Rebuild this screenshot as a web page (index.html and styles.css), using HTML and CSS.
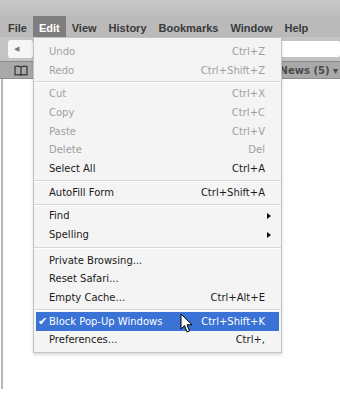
FILE: index.html
```html
<!DOCTYPE html>
<html lang="en">
<head>
    <meta charset="UTF-8">
    <meta name="viewport" content="width=device-width, initial-scale=1.0">
    <title>Safari - Edit menu</title>
    <link rel="stylesheet" href="styles.css">
</head>
<body>
    <div class="window">
        <div class="titlebar"></div>
        <div class="menubar">
            <span class="menu-title">File</span>
            <span class="menu-title active">Edit</span>
            <span class="menu-title">View</span>
            <span class="menu-title">History</span>
            <span class="menu-title">Bookmarks</span>
            <span class="menu-title">Window</span>
            <span class="menu-title">Help</span>
        </div>
        <div class="toolbar">
            <div class="back-btn">&#9664;</div>
            <div class="address"></div>
        </div>
        <div class="bookmarks">
            <svg class="book" width="14" height="11" viewBox="0 0 14 11">
                <path d="M1 1.5 Q4 0.5 7 2 Q10 0.5 13 1.5 L13 10 Q10 9 7 10.2 Q4 9 1 10 Z M7 2 L7 10.2" fill="none" stroke="#333" stroke-width="1.2"/>
            </svg>
            <span class="news">News (5) &#9662;</span>
        </div>
        <div class="content"></div>

        <div class="dropdown">
            <div class="item disabled"><span>Undo</span><span class="key">Ctrl+Z</span></div>
            <div class="item disabled"><span>Redo</span><span class="key">Ctrl+Shift+Z</span></div>
            <div class="sep"></div>
            <div class="item disabled"><span>Cut</span><span class="key">Ctrl+X</span></div>
            <div class="item disabled"><span>Copy</span><span class="key">Ctrl+C</span></div>
            <div class="item disabled"><span>Paste</span><span class="key">Ctrl+V</span></div>
            <div class="item disabled"><span>Delete</span><span class="key">Del</span></div>
            <div class="item"><span>Select All</span><span class="key">Ctrl+A</span></div>
            <div class="sep"></div>
            <div class="item"><span>AutoFill Form</span><span class="key">Ctrl+Shift+A</span></div>
            <div class="sep"></div>
            <div class="item"><span>Find</span><span class="arrow"></span></div>
            <div class="item"><span>Spelling</span><span class="arrow"></span></div>
            <div class="sep wide"></div>
            <div class="item"><span>Private Browsing...</span></div>
            <div class="item"><span>Reset Safari...</span></div>
            <div class="item"><span>Empty Cache...</span><span class="key">Ctrl+Alt+E</span></div>
            <div class="sep"></div>
            <div class="item selected"><span class="check">&#10004;</span><span>Block Pop-Up Windows</span><span class="key">Ctrl+Shift+K</span></div>
            <div class="item"><span>Preferences...</span><span class="key">Ctrl+,</span></div>

            <svg class="cursor" width="13" height="21" viewBox="0 0 13 21">
                <path d="M1 1 L1 16 L4.5 12.5 L7 19 L9.5 18 L7 11.8 L12 11.8 Z" fill="#fff" stroke="#000" stroke-width="1" stroke-linejoin="round"/>
            </svg>
        </div>
    </div>
</body>
</html>
```

FILE: styles.css
```css
body {
    margin: 0;
    background: #fff;
    font-family: "DejaVu Sans", Verdana, sans-serif;
}
.window {
    position: relative;
    width: 340px;
    height: 395px;
}
.titlebar {
    height: 16px;
    background: linear-gradient(#c9c9c9, #bcbcbc);
}
.menubar {
    height: 21px;
    display: flex;
    align-items: stretch;
    padding-left: 2px;
    background: #bababa;
    font-family: "Liberation Sans", Arial, sans-serif;
    font-size: 11px;
    font-weight: bold;
    color: #3a3a3a;
}
.menu-title {
    display: flex;
    align-items: center;
    padding: 2px 6px 0;
}
.menu-title.active {
    background: #7e7e7e;
    color: #fff;
}
.toolbar {
    height: 24px;
    display: flex;
    align-items: center;
    background: #c3c3c3;
    border-bottom: 1px solid #8a8a8a;
}
.back-btn {
    width: 25px;
    height: 18px;
    margin-left: 8px;
    background: #f6f6f6;
    border-radius: 3px;
    font-size: 7px;
    color: #777;
    display: flex;
    align-items: center;
    padding-left: 6px;
    box-sizing: border-box;
}
.address {
    flex: 1;
    height: 16px;
    margin-left: 10px;
    background: #fff;
    border-radius: 2px;
}
.bookmarks {
    height: 16px;
    display: flex;
    align-items: center;
    background: #a9a9a9;
    border-bottom: 1px solid #8e8e8e;
}
.book {
    margin-left: 14px;
}
.news {
    margin-left: auto;
    margin-right: 2px;
    font-size: 10px;
    font-weight: bold;
    color: #4a4a4a;
}
.content {
    height: 310px;
    margin-left: 1px;
    border-left: 2px solid #b5b5b5;
}
.dropdown {
    position: absolute;
    left: 33px;
    top: 37px;
    width: 247px;
    padding: 4px 0 3px;
    background: #f4f4f4;
    border: 1px solid #c4c4c4;
    box-shadow: 0 2px 3px rgba(0, 0, 0, 0.15);
    font-size: 10px;
    color: #1a1a1a;
}
.item {
    position: relative;
    height: 18.7px;
    display: flex;
    align-items: center;
    padding: 0 14px 0 13px;
    margin: 0 2px;
}
.item .key {
    margin-left: auto;
}
.item.disabled {
    color: #a0a0a0;
}
.item.selected {
    background: #3a72d6;
    color: #fff;
}
.check {
    position: absolute;
    left: 2px;
    font-size: 11px;
}
.arrow {
    margin-left: auto;
    margin-right: -6px;
    width: 0;
    height: 0;
    border-left: 4px solid #111;
    border-top: 3.5px solid transparent;
    border-bottom: 3.5px solid transparent;
}
.sep {
    height: 1px;
    margin: 2px 0 1px;
    border-top: 1px solid #d6d6d6;
    background: #fff;
}
.sep.wide {
    margin: 3px 0 2px;
}
.cursor {
    position: absolute;
    left: 146px;
    top: 275px;
}
```
